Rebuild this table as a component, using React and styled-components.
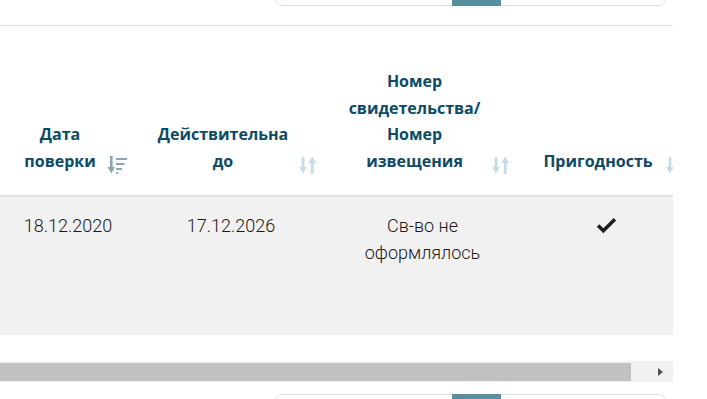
import React from 'react';
import styled, { createGlobalStyle } from 'styled-components';

const GlobalStyle = createGlobalStyle`
    body {
        margin: 0;
        background: #fff;
    }
`;

const columns = [
    { key: 'date', title: 'Дата поверки', width: 136, sort: 'desc' },
    { key: 'until', title: 'Действительна до', width: 190, sort: 'both' },
    { key: 'number', title: 'Номер свидетельства/ Номер извещения', width: 193, sort: 'both' },
    { key: 'ok', title: 'Пригодность', width: 174, sort: 'both' },
];

const rows = [
    { date: '18.12.2020', until: '17.12.2026', number: 'Св-во не оформлялось', ok: true },
];

// Иконки сортировки в заголовке
const SortIcon = ({ type }) => {
    if (type === 'desc') {
        return (
            <IconBox viewBox="0 0 20 18" $color="#8ba7b5">
                <rect x="2" y="0" width="2.6" height="13" />
                <polygon points="-0.4,11 7,11 3.3,17.5" />
                <rect x="8" y="2" width="11" height="2" />
                <rect x="8" y="7" width="8.5" height="2" />
                <rect x="8" y="12" width="6" height="2" />
                <rect x="8" y="16" width="2.5" height="1.6" />
            </IconBox>
        );
    }
    return (
        <IconBox viewBox="0 0 20 18" $color="#c7dbe2">
            <rect x="3.6" y="1" width="2.8" height="12" />
            <polygon points="1.2,11 8.8,11 5,17.5" />
            <rect x="12.8" y="5" width="2.8" height="13" />
            <polygon points="10.4,7 18,7 14.2,0.5" />
        </IconBox>
    );
};

const Check = () => (
    <CheckSvg viewBox="0 0 20 16">
        <path d="M2 8 L7 13 L18 2" />
    </CheckSvg>
);

const App = () => {
    return (
        <Page>
            <GlobalStyle />
            <PagerClip $side="top">
                <Pager>
                    <PageItem $active aria-label="Страница 1" />
                </Pager>
            </PagerClip>
            <Divider />

            <TableWrap>
                <Table>
                    <colgroup>
                        {columns.map((col) => (
                            <col key={col.key} style={{ width: col.width }} />
                        ))}
                    </colgroup>
                    <thead>
                        <tr>
                            {columns.map((col) => (
                                <HeadCell key={col.key}>
                                    {col.title}
                                    <SortIcon type={col.sort} />
                                </HeadCell>
                            ))}
                        </tr>
                    </thead>
                    <tbody>
                        {rows.map((row, index) => (
                            <BodyRow key={index}>
                                <Cell>{row.date}</Cell>
                                <Cell>{row.until}</Cell>
                                <Cell>{row.number}</Cell>
                                <Cell>{row.ok && <Check />}</Cell>
                            </BodyRow>
                        ))}
                    </tbody>
                </Table>
            </TableWrap>

            <ScrollTrack>
                <ScrollThumb />
                <ScrollArrow />
            </ScrollTrack>

            <PagerClip $side="bottom">
                <Pager>
                    <PageItem $active aria-label="Страница 1" />
                </Pager>
            </PagerClip>
        </Page>
    );
};

const Page = styled.div`
    width: 707px;
    height: 399px;
    overflow: hidden;
`;

const PagerClip = styled.div`
    height: ${props => (props.$side === 'top' ? '6px' : '5px')};
    margin-top: ${props => (props.$side === 'top' ? '0' : '12px')};
    overflow: hidden;
    display: flex;
    align-items: ${props => (props.$side === 'top' ? 'flex-end' : 'flex-start')};
    padding-left: 275px;
`;

const Pager = styled.div`
    box-sizing: border-box;
    width: 391px;
    height: 36px;
    flex-shrink: 0;
    border: 1px solid #dde2e5;
    border-radius: 7px;
    display: flex;
    padding-left: 176px;
`;

const PageItem = styled.div`
    width: 49px;
    margin: -1px 0;
    background: ${props => (props.$active ? '#578ea0' : 'transparent')};
`;

const Divider = styled.div`
    width: 673px;
    height: 1px;
    margin-top: 19px;
    background: #e2e5e7;
`;

const TableWrap = styled.div`
    width: 673px;
    overflow: hidden;
`;

const Table = styled.table`
    table-layout: fixed;
    border-collapse: collapse;
    width: 693px;
`;

const HeadCell = styled.th`
    position: relative;
    box-sizing: border-box;
    height: 170px;
    padding: 0 30px 21px 14px;
    vertical-align: bottom;
    text-align: center;
    border-bottom: 2px solid #dfe3e6;
    font-family: "Open Sans", sans-serif;
    font-weight: 700;
    font-size: 16px;
    line-height: 26.5px;
    color: #0d4a66;
`;

const IconBox = styled.svg`
    position: absolute;
    right: 8px;
    bottom: 21px;
    width: 20px;
    height: 18px;
    fill: ${props => props.$color};
`;

const BodyRow = styled.tr`
    background: #f1f1f1;
    height: 139px;
`;

const Cell = styled.td`
    padding: 15px 10px 0;
    vertical-align: top;
    text-align: center;
    font-family: Roboto, sans-serif;
    font-weight: 300;
    font-size: 18px;
    line-height: 27px;
    color: #1a1a1a;
`;

const CheckSvg = styled.svg`
    width: 21px;
    height: 17px;
    margin-top: 5px;
    fill: none;
    stroke: #1f1f1f;
    stroke-width: 3.4;
`;

const ScrollTrack = styled.div`
    width: 673px;
    height: 21px;
    margin-top: 26px;
    background: #f1f1f1;
    display: flex;
    align-items: center;
`;

const ScrollThumb = styled.div`
    width: 631px;
    height: 18px;
    background: #c1c1c1;
`;

const ScrollArrow = styled.div`
    margin-left: 27px;
    width: 0;
    height: 0;
    border-top: 4px solid transparent;
    border-bottom: 4px solid transparent;
    border-left: 5px solid #505060;
`;

export default App;
